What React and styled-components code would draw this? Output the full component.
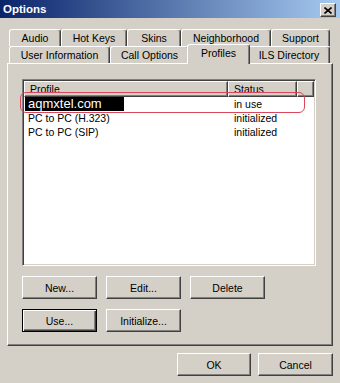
import React from 'react'
import styled, { createGlobalStyle } from 'styled-components';

const Global = createGlobalStyle`
    html, body { margin: 0; padding: 0; background: #d4d0c8; }
    body { font-family: "Liberation Sans", Arial, sans-serif; font-size: 10.5px; color: #000; }
`;

const Window = styled.div`
    width: 340px;
    height: 383px;
    background: #d4d0c8;
    display: flex;
    flex-direction: column;
    overflow: hidden;
`;

const TitleBar = styled.div`
    height: 18px;
    background: linear-gradient(to right, #0a246a, #a6caf0);
    display: flex;
    align-items: center;
    justify-content: space-between;
    padding: 0 4px 0 3px;
`;

const Title = styled.span`
    color: #fff;
    font-weight: bold;
    font-size: 11.5px;
`;

const CloseBtn = styled.div`
    width: 14px;
    height: 12px;
    margin-top: 2px;
    background: #d4d0c8;
    border-top: 1px solid #fff;
    border-left: 1px solid #fff;
    border-right: 1px solid #404040;
    border-bottom: 1px solid #404040;
    box-shadow: inset -1px -1px #808080;
    display: flex;
    align-items: center;
    justify-content: center;
`;

const Body = styled.div`
    padding: 11px 7px 0 7px;
    display: flex;
    flex-direction: column;
`;

const TabStrip = styled.div`
    margin: 0 3px 0 2px;
    display: flex;
    flex-direction: column;
`;

const TabRow = styled.div`
    display: flex;
    height: 17px;
    align-items: flex-end;
`;

const Tab = styled.div`
    width: ${p => p.$w + (p.$active ? 4 : 0)}px;
    height: ${p => p.$active ? 20 : 17}px;
    margin: 0 ${p => p.$active ? -2 : 0}px ${p => p.$active ? -1 : 0}px;
    box-sizing: border-box;
    background: #d4d0c8;
    border-top: 1px solid #fff;
    border-left: 1px solid #fff;
    border-right: 1px solid #404040;
    box-shadow: inset -1px 0 #808080;
    border-radius: 3px 3px 0 0;
    display: flex;
    align-items: ${p => p.$active ? 'flex-start' : 'center'};
    padding-top: ${p => p.$active ? 2 : 0}px;
    justify-content: center;
    position: relative;
    z-index: ${p => p.$active ? 2 : 0};
    white-space: nowrap;
`;

const Panel = styled.div`
    position: relative;
    z-index: 1;
    border-top: 1px solid #fff;
    border-left: 1px solid #fff;
    border-right: 1px solid #404040;
    border-bottom: 1px solid #404040;
    box-shadow: inset -1px -1px #808080;
    padding: 15px 0 13px 14px;
    display: flex;
    flex-direction: column;
`;

const ListBox = styled.div`
    position: relative;
    width: 294px;
    height: 187px;
    box-sizing: border-box;
    background: #fff;
    border-top: 1px solid #808080;
    border-left: 1px solid #808080;
    border-right: 1px solid #fff;
    border-bottom: 1px solid #fff;
    box-shadow: inset 1px 1px #404040, inset -1px -1px #d4d0c8;
    padding: 1px;
`;

const HeaderRow = styled.div`
    display: flex;
    height: 16px;
`;

const HeaderCell = styled.div`
    width: ${p => p.$w ? `${p.$w}px` : 'auto'};
    flex: ${p => p.$w ? 'none' : 1};
    box-sizing: border-box;
    background: #d4d0c8;
    border-top: 1px solid #fff;
    border-left: 1px solid #fff;
    border-right: 1px solid #404040;
    border-bottom: 1px solid #404040;
    box-shadow: inset -1px -1px #808080;
    padding-left: 5px;
    display: flex;
    align-items: center;
`;

const Row = styled.div`
    display: flex;
    height: 14px;
    align-items: center;
`;

const Cell = styled.div`
    width: ${p => p.$w}px;
    padding-left: ${p => p.$pad}px;
    box-sizing: border-box;
    white-space: nowrap;
`;

const EditLabel = styled.span`
    display: inline-block;
    width: 99px;
    height: 14px;
    line-height: 14px;
    background: #000;
    color: #fff;
    font-size: 13px;
    padding-left: 3px;
    box-sizing: border-box;
`;

const Highlight = styled.div`
    position: absolute;
    left: -3px;
    top: 12px;
    width: 285px;
    height: 21px;
    border: 1.5px solid #d8485a;
    border-radius: 6px;
    box-sizing: border-box;
    pointer-events: none;
`;

const ButtonGrid = styled.div`
    display: grid;
    grid-template-columns: repeat(3, 75px);
    gap: 10px 9px;
    margin-top: 10px;
`;

const Button = styled.div`
    width: ${p => p.$w || 75}px;
    height: 23px;
    box-sizing: border-box;
    background: #d4d0c8;
    border-top: 1px solid #fff;
    border-left: 1px solid #fff;
    border-right: 1px solid #404040;
    border-bottom: 1px solid #404040;
    box-shadow: inset -1px -1px #808080;
    display: flex;
    align-items: center;
    justify-content: center;
    outline: ${p => p.$default ? '1px solid #000' : 'none'};
    outline-offset: 0;
    ${p => p.$default && `
        border: 1px solid #000;
        box-shadow: inset 1px 1px #fff, inset -1px -1px #404040, inset -2px -2px #808080;
        outline: none;
    `}
`;

const Footer = styled.div`
    display: flex;
    justify-content: flex-end;
    gap: 7px;
    margin-top: 7px;
`;

const row1 = [
    ['Audio', 52], ['Hot Keys', 66], ['Skins', 54], ['Neighborhood', 90], ['Support', 59],
];
const row2 = [
    ['User Information', 101], ['Call Options', 79], ['Profiles', 59, true], ['ILS Directory', 82],
];

const profiles = [
    { name: 'aqmxtel.com', status: 'in use', editing: true },
    { name: 'PC to PC (H.323)', status: 'initialized' },
    { name: 'PC to PC (SIP)', status: 'initialized' },
];

export default function App() {
    return (
        <Window>
            <Global />
            <TitleBar>
                <Title>Options</Title>
                <CloseBtn>
                    <svg width="8" height="7" viewBox="0 0 8 7">
                        <path d="M0.5 0.5 L7.5 6.5 M7.5 0.5 L0.5 6.5" stroke="#000" strokeWidth="1.6" />
                    </svg>
                </CloseBtn>
            </TitleBar>
            <Body>
                <TabStrip>
                    <TabRow>
                        {row1.map(([label, w]) => <Tab key={label} $w={w}>{label}</Tab>)}
                    </TabRow>
                    <TabRow>
                        {row2.map(([label, w, active]) => (
                            <Tab key={label} $w={w} $active={active}>{label}</Tab>
                        ))}
                    </TabRow>
                </TabStrip>
                <Panel>
                    <ListBox>
                        <HeaderRow>
                            <HeaderCell $w={204}>Profile</HeaderCell>
                            <HeaderCell $w={69}>Status</HeaderCell>
                            <HeaderCell />
                        </HeaderRow>
                        {profiles.map(p => (
                            <Row key={p.name}>
                                <Cell $w={204} $pad={p.editing ? 1 : 4}>
                                    {p.editing ? <EditLabel>{p.name}</EditLabel> : p.name}
                                </Cell>
                                <Cell $w={80} $pad={6}>{p.status}</Cell>
                            </Row>
                        ))}
                        <Highlight />
                    </ListBox>
                    <ButtonGrid>
                        <Button>New...</Button>
                        <Button>Edit...</Button>
                        <Button>Delete</Button>
                        <Button $default>Use...</Button>
                        <Button>Initialize...</Button>
                    </ButtonGrid>
                </Panel>
                <Footer>
                    <Button $w={74}>OK</Button>
                    <Button>Cancel</Button>
                </Footer>
            </Body>
        </Window>
    )
}
